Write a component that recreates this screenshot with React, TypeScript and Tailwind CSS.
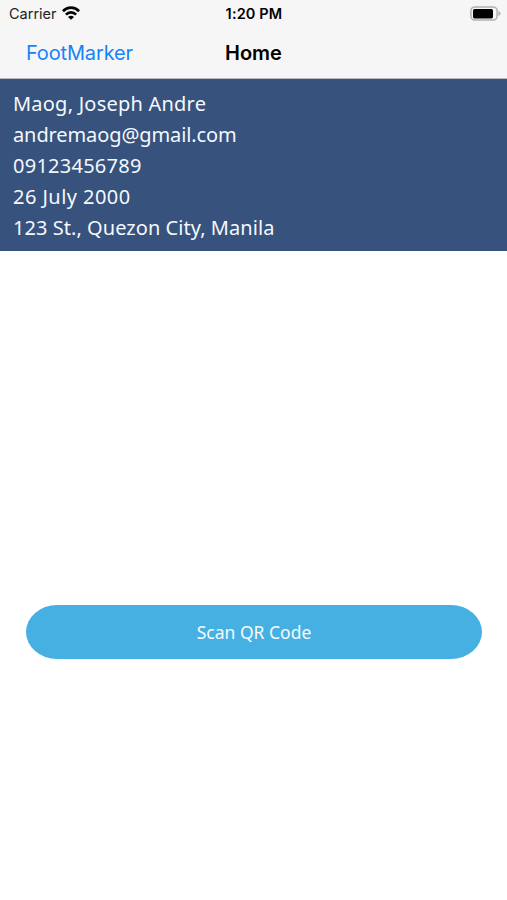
const profile = [
  { label: 'name', value: 'Maog, Joseph Andre', className: 'tracking-[0.22px]' },
  { label: 'email', value: 'andremaog@gmail.com', className: 'tracking-[-0.1px]' },
  { label: 'phone', value: '09123456789', className: 'tracking-[0.25px]' },
  { label: 'birthday', value: '26 July 2000', className: 'tracking-[0.45px]' },
  { label: 'address', value: '123 St., Quezon City, Manila', className: 'tracking-[0.05px]' },
];

function WifiIcon() {
  return (
    <svg className="mb-[2px]" width="18" height="14" viewBox="0 0 18 14" fill="none" stroke="#050505" strokeWidth="2.7">
      <path d="M0.9 5.2C5.4 0.5 12.6 0.5 17.1 5.2" />
      <path d="M3.9 8.6C6.8 5.7 11.2 5.7 14.1 8.6" />
      <path d="M9 13.8L6 10.9C7.7 9.3 10.3 9.3 12 10.9Z" fill="#050505" stroke="none" />
    </svg>
  );
}

function BatteryIcon() {
  return (
    <svg width="31" height="15" viewBox="0 0 31 15" fill="none">
      <rect x="0.9" y="0.9" width="26.2" height="13.2" rx="4" stroke="#b0b0b0" strokeWidth="1.5" />
      <rect x="3" y="3" width="20" height="9.4" rx="1.6" fill="#000" />
      <path d="M28.4 5C31.2 5.8 31.2 9.2 28.4 10Z" fill="#b0b0b0" />
    </svg>
  );
}

function StatusBar() {
  return (
    <div className="grid h-7 grid-cols-[1fr_auto_1fr] items-center pl-[7px] pr-[6px] text-[14.5px] text-[#222]">
      <div className="flex items-center gap-[5px] pl-[2px]">
        <span>Carrier</span>
        <WifiIcon />
      </div>
      <span className="text-center text-[14.5px] font-semibold tracking-[0.15px] text-black">1:20 PM</span>
      <div className="flex justify-end pb-[2px]">
        <BatteryIcon />
      </div>
    </div>
  );
}

function NavBar() {
  return (
    <div className="grid h-[51px] grid-cols-3 items-center border-b border-[#b5bac3] px-[25px] text-xl">
      <button className="pl-px text-left tracking-[-0.15px] text-[#1683f7]">FootMarker</button>
      <h1 className="text-center font-semibold text-black">Home</h1>
    </div>
  );
}

export default function App() {
  return (
    <div className="flex h-[900px] w-full flex-col overflow-hidden bg-white">
      <header className="bg-[#f7f6f7] font-['Inter',sans-serif]">
        <StatusBar />
        <NavBar />
      </header>

      {/* Profile details */}
      <section className="h-[172px] bg-[#37527d] px-[13px] pt-[9px] font-['Noto_Sans',sans-serif] text-xl leading-[31px] text-[#f5f8fc]">
        {profile.map((item) => (
          <p key={item.label} className="whitespace-nowrap">
            <span className={item.className}>{item.value}</span>
          </p>
        ))}
      </section>

      <main className="pl-[26px] pr-[25px] pt-[354px]">
        <button className="flex h-[54px] w-full items-center justify-center rounded-[31px/27px] bg-[#47b0e3] pt-px font-['Noto_Sans',sans-serif] text-[17.5px] text-[#f5fbff]">
          <span>Scan QR Code</span>
        </button>
      </main>
    </div>
  );
}
